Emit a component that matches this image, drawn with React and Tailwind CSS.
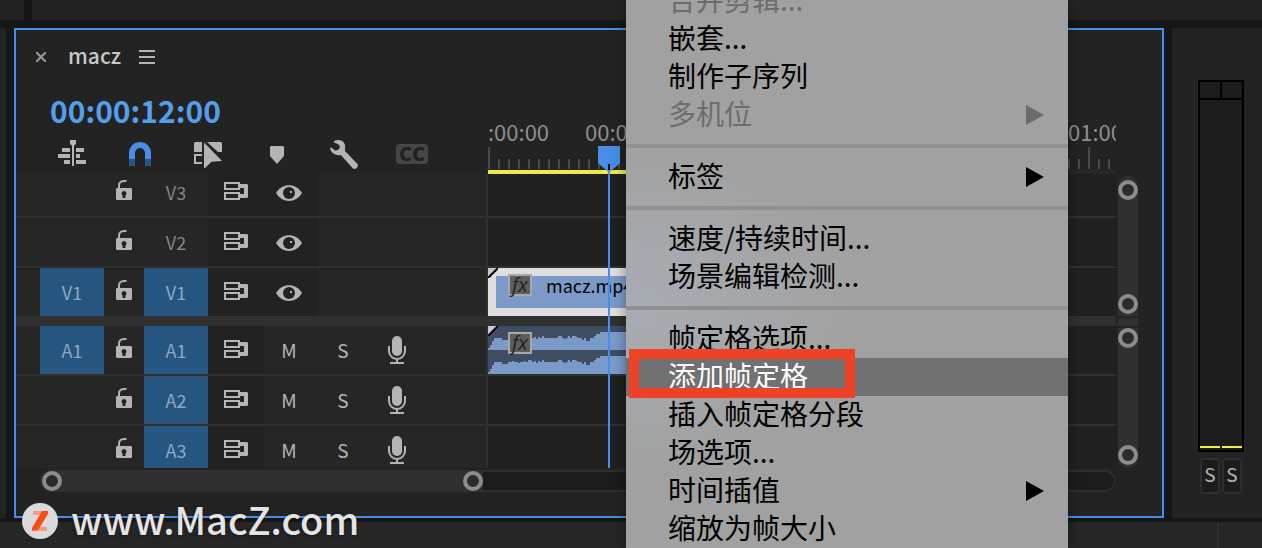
import React from "react";

const uiFont = "font-['Noto_Sans_CJK_SC','Noto_Sans',sans-serif]";

const videoTracks = [
  { name: "V3", cut: "top" },
  { name: "V2" },
  { name: "V1", source: true, target: true, clip: "video" },
];

const audioTracks = [
  { name: "A1", source: true, target: true, clip: "audio" },
  { name: "A2", target: true },
  { name: "A3", target: true, cut: "bottom" },
];

const menuGroups = [
  [
    { label: "合并剪辑...", disabled: true },
    { label: "嵌套..." },
    { label: "制作子序列" },
    { label: "多机位", disabled: true, submenu: true },
  ],
  [{ label: "标签", submenu: true }],
  [{ label: "速度/持续时间..." }, { label: "场景编辑检测..." }],
  [
    { label: "帧定格选项..." },
    { label: "添加帧定格", active: true },
    { label: "插入帧定格分段" },
    { label: "场选项..." },
    { label: "时间插值", submenu: true },
    { label: "缩放为帧大小" },
  ],
];

// waveform levels, one value for every 2px
const levels = [
  2, 5, 9, 12, 12, 12, 12, 10, 10, 10, 12, 12, 13, 12, 12, 11, 12, 12, 13, 12,
  14, 14, 12, 13, 11, 13, 12, 14, 12, 12, 12, 12, 12, 12, 12, 14, 14, 12, 11,
  12, 14, 12, 14, 14, 13, 12, 12, 10, 12, 9, 9, 12, 12, 14, 16, 16, 18, 18, 18,
  18, 18, 18, 18, 18, 18, 18, 18, 18, 18, 18, 18, 18, 18, 18, 18, 18,
];

const wavePath = (base) =>
  levels.reduce(
    (d, level, i) => `${d}V${base - level}H${i * 2 + 2}`,
    `M0 ${base}`
  ) + `V${base}Z`;

const AlignIcon = () => (
  <svg width="28" height="28" fill="#b4b4b4">
    <path d="M12 0h6v4l-2 1.500v20.500h-2V5.500L12 4zM4 8h8v4H4zM18 8h8v4h-8zM0 14h12v4H0zM18 14h4v4h-4zM6 20h6v4H6zM18 20h10v4H18z" />
  </svg>
);

const MagnetIcon = () => (
  <svg width="22" height="28">
    <path d="M0 19V13a11 11 0 0 1 22 0v6h-6v-6a5 5 0 0 0-10 0v6z" fill="#488ee6" />
    <path d="M0 19h6v7H0zM16 19h6v7h-6z" fill="#28548a" />
  </svg>
);

const LinkIcon = () => (
  <svg width="28" height="28" fill="#b4b4b4">
    <path d="M1 2h7v10H0V3zM13 2h14l1 1v9h-4zM0 14h8v2H2v6h6v2H0zM10 2.500l18 18.500-10.500 0.800L10 29z" />
  </svg>
);

const MarkerIcon = () => (
  <svg width="14" height="28" fill="#b4b4b4">
    <path d="M1 6h12l1 1v9l-7 8-7-8V7z" />
  </svg>
);

const WrenchIcon = () => (
  <svg width="28" height="30" fill="#b4b4b4">
    <path d="M4 1C7-.5 11 0 13 1.500c2 1.800 2.500 4.500 2 7.500v2L27.500 24c1.500 3-1.500 6-4.500 4.500L11 15.300C6.500 15.500 1.500 14 0 8.200l1.300-.6L5 10.500c2 .3 4-.8 4.500-2.500C10.300 5.500 9 4 4 2.500z" />
  </svg>
);

const LockIcon = () => (
  <svg width="16" height="24">
    <path d="M3 12V7.500C3 4 5.500 2.500 10.500 3" fill="none" stroke="#b4b4b4" strokeWidth="2" />
    <path d="M1 10h14l1 1v10l-1 1H1l-1-1V11z" fill="#b4b4b4" />
    <path d="M8 13a2.500 2.500 0 0 1 1.500 4.500V20h-3v-2.500A2.500 2.500 0 0 1 8 13z" fill="#222" />
  </svg>
);

const SyncIcon = () => (
  <svg width="24" height="24">
    <path d="M1 5h14v6H1zM1 15h14v6H1z" fill="none" stroke="#b4b4b4" strokeWidth="2" />
    <path d="M16 6h7l1 1v12l-1 1h-7v-4h4v-6h-4z" fill="#b4b4b4" />
  </svg>
);

const EyeIcon = () => (
  <svg width="26" height="24">
    <path d="M0 13C6 2.500 20 2.500 26 13 20 23.500 6 23.500 0 13z" fill="#b4b4b4" />
    <circle cx="13" cy="13" r="6" fill="#222" />
    <path d="M14 11h2v2h-2z" fill="#b4b4b4" />
  </svg>
);

const MicIcon = () => (
  <svg width="18" height="28" fill="none" stroke="#b4b4b4" strokeWidth="2">
    <rect x="4" y="0" width="10" height="20" rx="5" fill="#b4b4b4" stroke="none" />
    <path d="M1 10v5a8 8 0 0 0 16 0v-5M9 23v4M2 27h14" />
  </svg>
);

const Knob = ({ label }) => (
  <button
    type="button"
    aria-label={label}
    className="block size-5 shrink-0 rounded-full border-4 border-[#8c8c8c] bg-[#2b2b2b]"
  />
);

const Tools = () => (
  <div className="flex h-7 items-start">
    <button type="button" aria-label="Insert as nest" className="ml-[42px]">
      <AlignIcon />
    </button>
    <button type="button" aria-label="Snap" className="ml-[43px]">
      <MagnetIcon />
    </button>
    <button type="button" aria-label="Linked selection" className="ml-[43px]">
      <LinkIcon />
    </button>
    <button type="button" aria-label="Add marker" className="ml-12">
      <MarkerIcon />
    </button>
    <button type="button" aria-label="Display settings" className="ml-[46px]">
      <WrenchIcon />
    </button>
    <button
      type="button"
      className="mt-1 ml-[38px] h-5 w-8 rounded bg-[#474747] font-['Open_Sans',sans-serif] text-[20px] leading-5 font-extrabold text-[#222]"
    >
      CC
    </button>
  </div>
);

const Ruler = () => (
  <div className="flex min-w-0 flex-1 flex-col justify-end">
    <div className="flex overflow-hidden text-[22px] leading-[30px] text-[#8f8f8f]">
      <span>:00:00</span>
      <span className="ml-9">00:00</span>
      <span className="ml-auto w-12 overflow-hidden">01:00</span>
    </div>
    <svg width="100%" height="24">
      <defs>
        <pattern id="minor" width="10" height="24" patternUnits="userSpaceOnUse">
          <path d="M0 13h2v10H0z" fill="#4a4a4a" />
        </pattern>
        <pattern id="major" width="600" height="24" patternUnits="userSpaceOnUse">
          <path d="M0 1h2v22H0z" fill="#4a4a4a" />
        </pattern>
      </defs>
      <rect width="100%" height="24" fill="url(#minor)" />
      <rect width="100%" height="24" fill="url(#major)" />
    </svg>
    <div className="h-1 bg-[#282828]">
      <div className="h-1 w-[160px] bg-[#f0e94b]" />
    </div>
  </div>
);

const FxBadge = () => (
  <span className="flex h-[22px] w-6 items-center justify-center border-2 border-[#a8a8a8] bg-[#5e5e5e] font-['Open_Sans',sans-serif] text-[20px] leading-none text-[#222] italic">
    fx
  </span>
);

const Fold = () => (
  <svg width="10" height="10" className="absolute top-0 left-0">
    <path d="M0 0h10L0 10z" fill="#c8c8c8" />
    <path d="M0 10L10 0" stroke="#000" strokeWidth="2" />
  </svg>
);

const Clip = ({ type }) =>
  type === "video" ? (
    <div className="relative h-12 w-[152px] bg-[#dedede] py-2 pl-2">
      <Fold />
      <div className="flex h-8 items-start bg-[#7b9ac8] pl-3">
        <div className="-mt-0.5">
          <FxBadge />
        </div>
        <span className="ml-[14px] text-[18px] leading-[18px] text-black">
          macz.mp4
        </span>
      </div>
    </div>
  ) : (
    <div className="relative h-12 w-[152px] bg-[#3f4d63]">
      <svg width="152" height="48" fill="#7b9ac8" className="block">
        <path d={wavePath(24)} />
        <path d={wavePath(48)} />
      </svg>
      <Fold />
      <div className="absolute top-1.5 left-5">
        <FxBadge />
      </div>
    </div>
  );

const patch = "flex h-12 w-16 items-center justify-center text-[18px]";

const Track = ({ track, audio }) => (
  <div
    className={`flex overflow-hidden ${track.cut ? "h-[42px]" : "h-12"} ${
      track.cut === "top" ? "items-end" : "items-start"
    }`}
  >
    <div className="flex h-12 w-[472px] shrink-0 items-center border-r-2 border-[#303030] bg-[#262626]">
      <button
        type="button"
        aria-label={`Source ${track.name}`}
        className={`${patch} ml-6 ${track.source ? "bg-[#265680] text-[#8fa8c4]" : ""}`}
      >
        {track.source && track.name}
      </button>
      <button type="button" aria-label="Lock track" className="flex w-10 justify-center pb-1">
        <LockIcon />
      </button>
      <button
        type="button"
        className={`${patch} ${
          track.target ? "bg-[#265680] text-[#8fa8c4]" : "text-[#858585]"
        }`}
      >
        {track.name}
      </button>
      <button
        type="button"
        aria-label="Sync lock"
        className="flex h-12 w-14 items-center justify-center bg-[#222] pb-1"
      >
        <SyncIcon />
      </button>
      {audio ? (
        <>
          <button type="button" className="w-[50px] text-center text-[19px] text-[#b4b4b4]">
            M
          </button>
          <button type="button" className="ml-1 w-[50px] text-center text-[19px] text-[#b4b4b4]">
            S
          </button>
          <button type="button" aria-label="Voice-over record" className="ml-5">
            <MicIcon />
          </button>
        </>
      ) : (
        <button
          type="button"
          aria-label="Toggle track output"
          className="flex h-12 w-[54px] items-center bg-[#222] pl-3"
        >
          <EyeIcon />
        </button>
      )}
    </div>
    <div className="h-12 min-w-0 flex-1 bg-[#202020]">
      {track.clip && <Clip type={track.clip} />}
    </div>
  </div>
);

const Playhead = () => (
  <div className="absolute top-[62px] bottom-0 left-[582px] flex w-[22px] flex-col items-center">
    <svg width="22" height="28" className="shrink-0">
      <path d="M0 0h22v17l-9 8H9l-9-8z" fill="#488ee6" />
      <path d="M10 18h2v6h-2z" fill="#000" />
      <path d="M10 24h2v4h-2z" fill="#488ee6" />
    </svg>
    <div className="w-0.5 flex-1 bg-[#488ee6]" />
  </div>
);

const Timeline = () => (
  <section className="min-w-0 flex-1 border-2 border-[#488ee6] bg-[#232323]">
    <div className="flex h-[54px] items-center pl-5 text-[#c8c8c8]">
      <button type="button" aria-label="Close sequence">
        <svg width="10" height="10" stroke="#999" strokeWidth="2">
          <path d="M0 0l10 10M10 0L0 10" />
        </svg>
      </button>
      <h1 className="ml-[22px] pb-1 text-[21px] leading-[30px] font-medium">macz</h1>
      <button type="button" aria-label="Panel menu" className="ml-[18px]">
        <svg width="16" height="14" fill="#b4b4b4">
          <path d="M0 0h16v2H0zM0 6h16v2H0zM0 12h16v2H0z" />
        </svg>
      </button>
    </div>

    <div className="relative">
      <div className="flex h-[90px] pr-[46px]">
        <div className="flex w-[472px] shrink-0 flex-col">
          <div className="h-14 pl-[34px] text-[30px] leading-[52px] font-bold text-[#559fea]">
            00:00:12:00
          </div>
          <Tools />
        </div>
        <Ruler />
      </div>

      <div className="flex pr-6">
        <div className="min-w-0 flex-1">
          <div className="flex flex-col gap-0.5 bg-[#303030]">
            {videoTracks.map((track) => (
              <Track key={track.name} track={track} />
            ))}
          </div>
          <div className="h-2.5 bg-[#303030]" />
          <div className="flex flex-col gap-0.5 bg-[#303030]">
            {audioTracks.map((track) => (
              <Track key={track.name} track={track} audio />
            ))}
          </div>
        </div>
        <div className="flex w-[22px] flex-col pl-0.5">
          <div className="mt-0.5 flex h-[140px] flex-col justify-between rounded-t-full bg-[#303030] pt-1 pb-0.5">
            <Knob label="Video zoom start" />
            <Knob label="Video zoom end" />
          </div>
          <div className="mt-0.5 h-2 bg-[#303030]" />
          <div className="mt-0.5 flex h-[140px] flex-col justify-between rounded-b-full bg-[#303030] pb-[3px]">
            <Knob label="Audio zoom start" />
            <Knob label="Audio zoom end" />
          </div>
        </div>
      </div>
      <Playhead />
    </div>

    <div className="mt-0.5 mr-[46px] ml-6 flex h-[22px] items-center rounded-full border-2 border-[#2e2e2e] bg-[#1c1c1c]">
      <div className="flex h-[22px] w-[441px] items-center justify-between rounded-l-full bg-[#303030]">
        <Knob label="Zoom start" />
        <Knob label="Zoom end" />
      </div>
    </div>
  </section>
);

const AudioMeter = () => (
  <aside className="w-[90px] shrink-0 bg-[#232323] pt-[52px] pl-[26px]">
    <div className="flex h-[372px] w-[46px] flex-col border-2 border-black bg-[#1d1d1d]">
      <div className="flex h-[18px] border-b-2 border-black">
        <div className="flex-1 border-r-2 border-black" />
        <div className="w-5" />
      </div>
      <div className="mt-auto mb-0.5 flex gap-0.5">
        <div className="h-0.5 flex-1 bg-[#f5ee45]" />
        <div className="h-0.5 flex-1 bg-[#f5ee45]" />
      </div>
    </div>
    <div className="mt-1.5 ml-0.5 flex gap-0.5">
      {["Solo left", "Solo right"].map((name) => (
        <button
          key={name}
          type="button"
          aria-label={name}
          className="h-9 w-5 rounded border-2 border-[#2e2e2e] bg-[#1c1c1c] pb-1 text-[19px] leading-7 text-[#b4b4b4]"
        >
          S
        </button>
      ))}
    </div>
  </aside>
);

const MenuItem = ({ item }) => (
  <button
    type="button"
    role="menuitem"
    disabled={item.disabled}
    className={`relative flex h-[38px] w-full shrink-0 items-center justify-between pr-6 pl-[42px] text-left text-[28px] leading-[34px] whitespace-nowrap ${
      item.active ? "bg-[#717171] text-white" : ""
    } ${item.disabled ? "text-[#6c6c6c]" : ""}`}
  >
    <span className="pb-1">{item.label}</span>
    {item.submenu && (
      <svg width="18" height="20" fill="currentColor">
        <path d="M0 0l18 10L0 20z" />
      </svg>
    )}
    {item.active && (
      <span className="absolute -top-[9px] left-[3px] h-[49px] w-[226px] border-10 border-[#ee4126]" />
    )}
  </button>
);

const ContextMenu = () => (
  <div
    role="menu"
    className="absolute inset-y-0 left-[626px] flex w-[442px] flex-col justify-end overflow-hidden bg-[#a1a1a1] bg-[radial-gradient(ellipse_at_0%_56%,#a8adb4_0%,#a1a1a1_38%)] text-black shadow-[0_0_12px_rgba(0,0,0,0.4)]"
  >
    {menuGroups.map((group, i) => (
      <React.Fragment key={i}>
        {i > 0 && <div className="my-2.5 h-1 shrink-0 bg-[#919191]" />}
        {group.map((item) => (
          <MenuItem key={item.label} item={item} />
        ))}
      </React.Fragment>
    ))}
  </div>
);

const Watermark = () => (
  <a
    href="#"
    className="absolute bottom-0 left-[22px] flex h-[54px] items-center gap-[13px] text-[#e4e4e4]"
  >
    <svg width="36" height="36">
      <circle cx="18" cy="18" r="18" fill="#dadada" />
      <path d="M11 8h14v4H11zM12 24h13v4H12z" fill="#ee9c85" />
      <path d="M20 8h6v3L16 27l-6 1v-3z" fill="#fa4d14" />
    </svg>
    <span className="pb-1 text-[38px] leading-none font-medium [text-shadow:0_1px_3px_rgba(0,0,0,0.5)]">
      www.MacZ.com
    </span>
  </a>
);

export default function App() {
  return (
    <div className={`relative flex h-screen flex-col overflow-hidden bg-[#161616] ${uiFont}`}>
      <div className="flex h-5 shrink-0 gap-2">
        <div className="w-6 bg-[#232323]" />
        <div className="flex-1 bg-[#232323]" />
      </div>
      <main className="mt-2 flex flex-1 gap-2">
        <div className="w-1.5 bg-[#232323]" />
        <Timeline />
        <AudioMeter />
      </main>
      <div className="mt-1 flex h-[26px] shrink-0 justify-end bg-[#262626] pr-[43px]">
        <div className="w-0.5 bg-[#303030]" />
      </div>
      <ContextMenu />
      <Watermark />
    </div>
  );
}
